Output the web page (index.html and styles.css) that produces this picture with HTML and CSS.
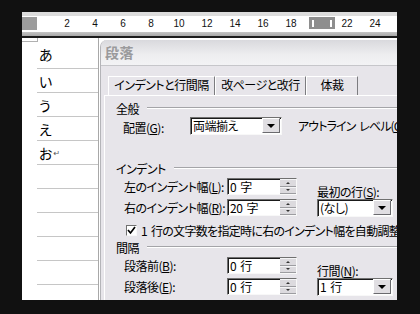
FILE: index.html
```html
<!DOCTYPE html>
<html lang="ja">
<head>
<meta charset="utf-8">
<title>段落</title>
<link rel="stylesheet" href="styles.css">
</head>
<body>
<div class="screen">
  <div class="ruler">
    <div class="ruler-top"></div>
    <div class="ruler-scale">
      <div class="ruler-margin"></div>
      <div class="ruler-spacer"></div>
      <span class="tick">2</span>
      <span class="tick">4</span>
      <span class="tick">6</span>
      <span class="tick">8</span>
      <span class="tick">10</span>
      <span class="tick">12</span>
      <span class="tick">14</span>
      <span class="tick">16</span>
      <span class="tick">18</span>
      <span class="tick marker-cell"><span class="marker"><i></i><i></i></span></span>
      <span class="tick">22</span>
      <span class="tick">24</span>
    </div>
    <div class="ruler-bottom"></div>
  </div>
  <div class="main">
    <div class="doc">
      <div class="corner"></div>
      <div class="doc-row first"><span>あ</span></div>
      <div class="doc-row"><span>い</span></div>
      <div class="doc-row"><span>う</span></div>
      <div class="doc-row"><span>え</span></div>
      <div class="doc-row"><span>お</span><span class="ret">↵</span></div>
      <div class="doc-row"></div>
      <div class="doc-row"></div>
      <div class="doc-row"></div>
      <div class="doc-row"></div>
      <div class="doc-row"></div>
    </div>
    <div class="dialog">
      <div class="titlebar">段落</div>
      <div class="dbody">
        <div class="tabs">
          <div class="tab active t1">インデントと行間隔</div>
          <div class="tab t2">改ページと改行</div>
          <div class="tab t3">体裁</div>
        </div>
        <div class="panel">
          <div class="ghead"><span>全般</span><span class="gline"></span></div>
          <div class="general">
            <span class="glabel">配置(<u>G</u>):</span>
            <div class="select sel-align"><span class="val">両端揃え</span><span class="dd"><i></i></span></div>
            <span class="outline">アウトライン レベル(<u>O</u>):</span>
          </div>

          <div class="ghead indent-head"><span>インデント</span><span class="gline"></span></div>
          <div class="fgrid">
            <span class="lbl">左のインデント幅(<u>L</u>):</span>
            <div class="spin"><span class="val">0 字</span><span class="sb"><b class="up"></b><b class="down"></b></span></div>
            <span class="rlbl">最初の行(<u>S</u>):</span>
            <span class="lbl">右のインデント幅(<u>R</u>):</span>
            <div class="spin"><span class="val">20 字</span><span class="sb"><b class="up"></b><b class="down"></b></span></div>
            <div class="select rsel"><span class="val">(なし)</span><span class="dd"><i></i></span></div>
          </div>
          <div class="check-row">
            <span class="cbox"><svg width="9" height="9" viewBox="0 0 9 9"><polyline points="1,4 3.5,7 8,1" fill="none" stroke="#000" stroke-width="1.7"/></svg></span>
            <span class="ctext">1 行の文字数を指定時に右のインデント幅を自動調整</span>
          </div>

          <div class="ghead"><span>間隔</span><span class="gline"></span></div>
          <div class="fgrid">
            <span class="lbl">段落前(<u>B</u>):</span>
            <div class="spin"><span class="val">0 行</span><span class="sb"><b class="up"></b><b class="down"></b></span></div>
            <span class="rlbl">行間(<u>N</u>):</span>
            <span class="lbl">段落後(<u>E</u>):</span>
            <div class="spin"><span class="val">0 行</span><span class="sb"><b class="up"></b><b class="down"></b></span></div>
            <div class="select rsel"><span class="val">1 行</span><span class="dd"><i></i></span></div>
          </div>
        </div>
      </div>
    </div>
  </div>
</div>
</body>
</html>
```
FILE: styles.css
```css
* { box-sizing: border-box; }
html, body { margin: 0; padding: 0; }
body {
  background: #111;
  width: 420px;
  height: 314px;
  overflow: hidden;
  font-family: "Noto Sans CJK JP", sans-serif;
  font-feature-settings: "palt";
  font-size: 12px;
  color: #000;
}
u { text-decoration: underline; text-underline-offset: 1px; }

.screen {
  margin: 12px 0 0 22px;
  width: 375px;
  height: 288px;
  overflow: hidden;
  background: #fff;
  display: flex;
  flex-direction: column;
}

/* ruler */
.ruler { flex: none; }
.ruler-top { height: 4px; background: #dcdcdc; }
.ruler-scale {
  height: 16px;
  background: #fff;
  display: flex;
  align-items: center;
  font-family: "Liberation Sans", sans-serif;
  font-size: 10px;
  color: #111;
}
.ruler-margin { width: 15px; height: 13px; background: #9c9c9c; align-self: flex-start; margin-top: 1px; flex: none; }
.ruler-spacer { width: 16px; flex: none; }
.tick { width: 28px; text-align: center; flex: none; line-height: 12px; }
.marker-cell { display: flex; align-self: flex-start; margin-top: 1px; }
.marker {
  flex: none;
  width: 26px;
  height: 12px;
  margin-left: 4px;
  background: #8e8e8e;
  display: flex;
  justify-content: space-between;
  align-items: center;
  padding: 0 3px;
}
.marker i { width: 2px; height: 7px; background: #fff; }
.ruler-bottom { height: 6px; background: linear-gradient(#c4c4c4, #a8a8a8); border-bottom: 2px solid #1c1c1c; }

/* main */
.main { flex: 1; display: flex; min-height: 0; }

.doc {
  flex: none;
  width: 77px;
  border-right: 1px solid #a8a8a8;
  display: flex;
  flex-direction: column;
  position: relative;
}
.corner {
  position: absolute;
  left: 0;
  top: 0;
  width: 16px;
  height: 4px;
  border-right: 1px solid #b0b0b0;
  border-bottom: 1px solid #b0b0b0;
}
.doc-row {
  margin-left: 15px;
  height: 24px;
  border-bottom: 1px solid #c6c6c6;
  padding-left: 2px;
  display: flex;
  align-items: center;
  font-size: 14px;
  line-height: 16px;
  flex: none;
}
.doc-row.first { height: 31px; padding-top: 1px; }
.ret { font-family: "DejaVu Sans", sans-serif; font-size: 8px; color: #555; margin-left: 1px; margin-top: 3px; }

/* dialog */
.dialog {
  flex: none;
  width: 340px;
  margin: 2px 0 0 1px;
  border-top-left-radius: 7px;
  border-left: 1px solid #b4b4b8;
  background: #e7e5ea;
  overflow: hidden;
  display: flex;
  flex-direction: column;
  letter-spacing: -0.5px;
  word-spacing: 2px;
}
.titlebar {
  height: 26px;
  flex: none;
  background: linear-gradient(#d9d9dd, #eeeef0 60%, #f3f3f5);
  border-bottom: 1px solid #c6c6ca;
  padding-left: 4px;
  line-height: 25px;
  font-size: 14px;
  font-weight: bold;
  color: #9a9a9c;
  letter-spacing: 0.5px;
}
.dbody { flex: 1; padding: 10px 0 0 3px; display: flex; flex-direction: column; }
.tabs { display: flex; padding-left: 4px; height: 19px; flex: none; }
.tab {
  height: 19px;
  border-left: 1px solid #fff;
  border-top: 1px solid #fff;
  border-right: 1px solid #7c7c80;
  line-height: 16px;
  text-align: center;
  white-space: nowrap;
  flex: none;
}
.t1 { width: 107px; }
.t2 { width: 91px; }
.t3 { width: 52px; }

.panel {
  flex: 1;
  border-top: 1px solid #fff;
  border-left: 1px solid #fff;
  padding-top: 4px;
}

.ghead {
  height: 16px;
  display: flex;
  align-items: center;
  gap: 8px;
  padding-left: 11px;
  white-space: nowrap;
}
.gline { flex: 1; border-top: 1px solid #a4a4a8; border-bottom: 1px solid #fff; height: 2px; }
.indent-head { margin-top: 25px; }

.general {
  height: 19px;
  display: flex;
  align-items: center;
  padding-left: 18px;
  white-space: nowrap;
}
.glabel { width: 67px; flex: none; padding-top: 3px; }
.outline { margin-left: 16px; letter-spacing: -0.9px; }

.fgrid {
  display: grid;
  grid-template-columns: 103px 70px 20px 90px;
  grid-auto-rows: 19px;
  row-gap: 2px;
  padding-left: 19px;
  margin-top: 1px;
}
.lbl { align-self: center; white-space: nowrap; line-height: 14px; }
.rlbl { grid-column: 4; align-self: end; white-space: nowrap; line-height: 14px; margin-bottom: -3px; }

.spin, .select {
  align-self: center;
  height: 17px;
  background: #fff;
  border-style: solid;
  border-width: 1px;
  border-color: #707070 #f8f8f8 #f8f8f8 #707070;
  box-shadow: inset 1px 1px 0 #1a1a1a;
  display: flex;
  align-items: center;
  line-height: 14px;
  white-space: nowrap;
}
.spin { width: 70px; }
.val { flex: 1; padding-left: 2px; padding-top: 1px; }
.sb {
  width: 16px;
  height: 15px;
  display: flex;
  flex-direction: column;
  flex: none;
}
.sb b {
  flex: 1;
  background: #dcdade;
  border-top: 1px solid #f4f4f6;
  border-bottom: 1px solid #9c9ca0;
  display: flex;
  align-items: center;
  justify-content: center;
}
.sb b::after { content: ""; width: 0; height: 0; border-left: 2px solid transparent; border-right: 2px solid transparent; }
.sb .up::after { border-bottom: 2px solid #333; }
.sb .down::after { border-top: 2px solid #333; }

.select { height: 18px; }
.sel-align { width: 92px; flex: none; }
.rsel { grid-column: 4; width: 76px; justify-self: start; }
.dd {
  width: 18px;
  height: 15px;
  margin-right: 1px;
  flex: none;
  background: #e0dee2;
  border-style: solid;
  border-width: 1px;
  border-color: #fff #6a6a6e #6a6a6e #fff;
  display: flex;
  align-items: center;
  justify-content: center;
}
.dd i { width: 0; height: 0; border-left: 4px solid transparent; border-right: 4px solid transparent; border-top: 4px solid #000; }

.check-row {
  height: 18px;
  margin-top: 4px;
  display: flex;
  align-items: center;
  padding-left: 21px;
  white-space: nowrap;
}
.cbox {
  width: 11px;
  height: 11px;
  flex: none;
  background: #fff;
  border-style: solid;
  border-width: 1px;
  border-color: #707070 #f8f8f8 #f8f8f8 #707070;
  display: flex;
  align-items: center;
  justify-content: center;
}
.ctext { margin-left: 4px; letter-spacing: -0.7px; }
```
